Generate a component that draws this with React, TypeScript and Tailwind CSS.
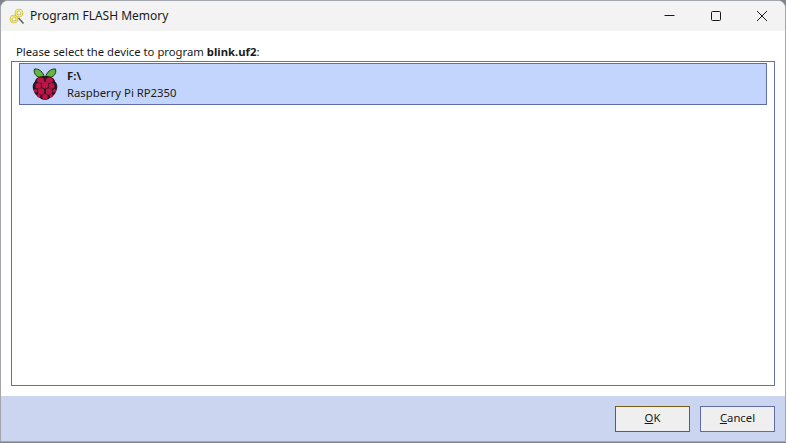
const font = { fontFamily: '"Noto Sans", "Open Sans", sans-serif' };

function KeyIcon() {
  return (
    <svg width="16" height="17" viewBox="0 0 16 17" fill="none">
      <path d="M9.500 10l5 5.500" stroke="#5a5a5a" strokeWidth="1.400" />
      <circle cx="5" cy="11" r="3" stroke="#b9ae2c" strokeWidth="2.600" />
      <circle cx="5" cy="11" r="3" stroke="#efe96a" strokeWidth="1.400" />
      <circle cx="10" cy="5" r="3" stroke="#b9ae2c" strokeWidth="2.600" />
      <circle cx="10" cy="5" r="3" stroke="#f3ee7c" strokeWidth="1.400" />
      <circle cx="11.500" cy="2.800" r="0.900" fill="#fffde0" />
      <circle cx="3" cy="9.500" r="0.800" fill="#fffde0" />
    </svg>
  );
}

function RaspberryIcon() {
  return (
    <svg width="26" height="33" viewBox="0 0 26 33">
      <path d="M12.500 9.500C11.500 4 7 0.500 2.500 1C1 6 5.500 11 12.500 9.500Z" fill="#62b83f" stroke="#20351a" strokeWidth="1" />
      <path d="M13.500 9.500C14.500 4 19 0.500 23.500 1C25 6 20.500 11 13.500 9.500Z" fill="#62b83f" stroke="#20351a" strokeWidth="1" />
      <path d="M13 8C7 8 3.500 10 3 13.500C0.500 15.500 0 19 1.500 22.500C2.500 26 5 28.500 8 30C10 32.500 16 32.500 18 30C21 28.500 23.500 26 24.500 22.500C26 19 25.500 15.500 23 13.500C22.500 10 19 8 13 8Z" fill="#2a1a20" />
      <g fill="#bd1347">
        <ellipse cx="8.500" cy="12.200" rx="3.500" ry="2.700" />
        <ellipse cx="17.500" cy="12.200" rx="3.500" ry="2.700" />
        <circle cx="13" cy="17" r="3.400" />
        <circle cx="6.300" cy="17.800" r="2.900" />
        <circle cx="19.700" cy="17.800" r="2.900" />
        <circle cx="9" cy="23.500" r="3.200" />
        <circle cx="17" cy="23.500" r="3.200" />
        <circle cx="3.600" cy="22.800" r="1.700" />
        <circle cx="22.400" cy="22.800" r="1.700" />
        <circle cx="13" cy="28.800" r="2.800" />
        <circle cx="6.800" cy="27.800" r="1.700" />
        <circle cx="19.200" cy="27.800" r="1.700" />
      </g>
    </svg>
  );
}

export default function App() {
  return (
    <div className="w-[786px] h-[443px] overflow-hidden bg-[#7f848f] text-[11.3px] text-[#1a1a1a]" style={font}>
      <div className="flex flex-col w-[786px] h-[442px] rounded-t-lg overflow-hidden border border-[#a3a6ad] bg-white">
        <header className="flex items-center h-[30px] shrink-0 bg-[#f3f3f3]">
          <div className="ml-2 mr-[5px]">
            <KeyIcon />
          </div>
          <span className="flex-1 text-xs">Program FLASH Memory</span>
          <div className="flex items-center">
            <button className="flex items-center justify-center w-[46px] h-[30px]">
              <svg width="12" height="12" viewBox="0 0 12 12"><path d="M0.500 5.500h10" stroke="#1a1a1a" /></svg>
            </button>
            <button className="flex items-center justify-center w-[46px] h-[30px]">
              <svg width="12" height="12" viewBox="0 0 12 12"><rect x="1.500" y="1.500" width="9" height="9" rx="1" fill="none" stroke="#1a1a1a" /></svg>
            </button>
            <button className="flex items-center justify-center w-[46px] h-[30px]">
              <svg width="12" height="12" viewBox="0 0 12 12"><path d="M1 1l10 10M11 1L1 11" stroke="#1a1a1a" /></svg>
            </button>
          </div>
        </header>
        <main className="flex flex-col flex-1 min-h-0 px-[10px] pt-[12px] pb-[10px]">
          <p className="px-[5px] h-[18px] leading-[17px]">
            Please select the device to program <b>blink.uf2</b>:
          </p>
          <div className="flex-1 border border-[#6272a8] p-[1px] pl-[7px] pr-[7px]">
            <div className="flex items-center h-[42px] border border-[#5f6fa3] bg-[#c3d5fd]">
              <div className="ml-[12px] mr-[9px]">
                <RaspberryIcon />
              </div>
              <div className="leading-[17px]">
                <div className="font-bold">F:\</div>
                <div>Raspberry Pi RP2350</div>
              </div>
            </div>
          </div>
        </main>
        <footer className="flex items-center justify-end gap-[10px] h-[45px] shrink-0 pr-[10px] bg-[#cbd5ef]">
          <button className="w-[75px] h-[26px] border border-[#7a5c14] bg-[#efefef]">
            <u>O</u>K
          </button>
          <button className="w-[75px] h-[26px] border border-[#5d6ea6] bg-[#efefef]">
            <u>C</u>ancel
          </button>
        </footer>
      </div>
    </div>
  );
}
